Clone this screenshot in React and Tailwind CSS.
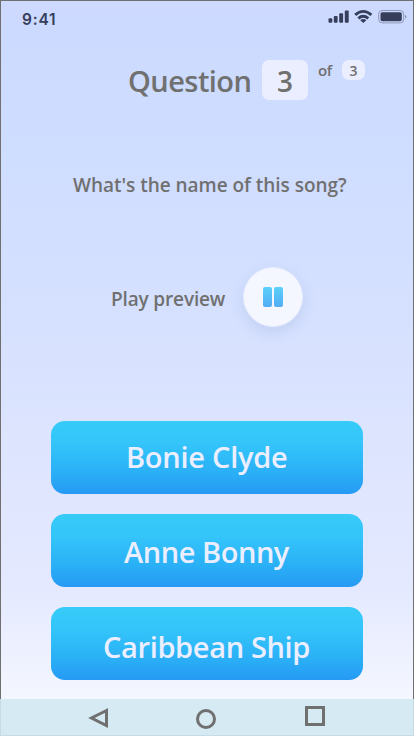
import React from "react";

const answers = [
  { label: "Bonie Clyde", style: "pt-[21px] pl-[75px] tracking-[-0.25px]" },
  { label: "Anne Bonny", style: "pt-[23px] pl-[73px] tracking-[-0.45px]" },
  { label: "Caribbean Ship", style: "pt-[25px] pl-[52px] tracking-[-0.35px]" },
];

function StatusBar() {
  return (
    <header className="flex h-[32px] shrink-0 items-start justify-between pl-[21px] text-[#363e5c]">
      <span className="pt-[10px] font-[Inter,sans-serif] text-[15.5px] leading-[18px] font-semibold tracking-[0.8px]">9:41</span>
      <svg width="80" height="32" viewBox="328 0 80 32" fill="currentColor" className="mt-[-1px] mr-[5px]">
        <rect x="328.5" y="18.3" width="3.8" height="4.5" rx="1" />
        <rect x="333.8" y="16" width="3.8" height="6.8" rx="1" />
        <rect x="339.2" y="13.3" width="3.9" height="9.5" rx="1" />
        <rect x="344.8" y="10.5" width="3.9" height="12.3" rx="1" />
        <g fill="none" stroke="currentColor" strokeWidth="2.8">
          <path d="M355.2 14.9 Q363.2 7.9 371.4 14.9" />
          <path d="M358.3 18.4 Q363.2 14.2 368.3 18.4" />
        </g>
        <path d="M360.2 20.2 Q363.2 17.8 366.4 20.2 L363.3 23Z" />
        <rect x="378.7" y="10.5" width="25" height="12.4" rx="3.5" fill="none" stroke="#8e98b9" />
        <rect x="380.5" y="12.2" width="21.3" height="9" rx="1.8" />
        <path d="M405 14.7 Q408 16.7 405 18.7Z" fill="#8e98b9" />
      </svg>
    </header>
  );
}

export default function App() {
  return (
    <div className="flex h-[736px] w-[414px] flex-col overflow-hidden font-['Open_Sans','Noto_Sans',sans-serif] font-semibold whitespace-nowrap text-[#707070]">
      <main className="flex h-[699px] shrink-0 flex-col border border-b-0 border-[#707070] bg-[linear-gradient(180deg,#cdd9ff_0%,#cddcff_14%,#d6e1ff_46%,#dee5fe_66%,#e4e9ff_84%,#f4f7ff_100%)]">
        <StatusBar />
        <div className="flex h-[69px] items-start pt-[27px] pl-[127px] leading-none">
          <h1 className="w-[134px] pt-[6px] text-[29px] leading-[30px] tracking-[-0.55px]">Question</h1>
          <div className="flex h-[40px] w-[46px] justify-center rounded-[7px] bg-[#ebeeff] pt-[6px] text-[28px] leading-[30px]">3</div>
          <span className="w-[34px] pt-[3px] pl-[10px] text-[15px] font-semibold tracking-[-0.4px]">of</span>
          <div className="flex h-[20px] w-[23px] justify-center rounded-[7px] bg-[#ebeeff] pt-[4px] text-[14px] leading-none font-semibold">3</div>
        </div>
        <h2 className="mt-[73px] h-[28px] pl-[72px] text-[19px] leading-[20px] tracking-[-0.03px]">What's the name of this song?</h2>
        <div className="mt-[64px] flex h-[60px] items-start pl-[110px]">
          <span className="w-[132px] pt-[22px] text-[19px] leading-[20px] tracking-[-0.15px]">Play preview</span>
          <button aria-label="Pause" className="flex size-[60px] items-center justify-center gap-[2px] rounded-full border border-[#e8edfd] bg-[#f4f7ff] shadow-[0_5px_14px_rgba(75,105,170,0.15)]">
            <span className="h-[20px] w-[9px] rounded-[2px] bg-linear-to-b from-[#5bd0f9] to-[#52adf5]" />
            <span className="h-[20px] w-[9px] rounded-[2px] bg-linear-to-b from-[#5bd0f9] to-[#52adf5]" />
          </button>
        </div>
        <div className="mt-[94px] flex flex-col gap-[20px] px-[50px]">
          {answers.map(({ label, style }) => (
            <button
              key={label}
              className={`h-[73px] w-[312px] rounded-[14px] bg-[linear-gradient(180deg,#36cbf8_0%,#34c5fa_30%,#2ab0f6_70%,#269af4_100%)] text-left text-[29px] leading-[30px] text-[#ebeeff] ${style}`}
            >
              <span className="block h-[73px]">{label}</span>
            </button>
          ))}
        </div>
      </main>
      <nav className="flex h-[37px] shrink-0 items-start border border-t-0 border-[#c5dce5] bg-[#d6eaf3] pl-[87px]">
        <svg width="21" height="20" viewBox="0 0 21 20" className="mt-[9px]" fill="none" stroke="#707070" strokeWidth="3">
          <path d="M18.5 2.5 L3.5 10 L18.5 17.5Z" />
        </svg>
        <span className="mt-[10px] ml-[87px] size-[20px] rounded-full border-3 border-[#707070]" />
        <span className="mt-[7px] ml-[89px] size-[20px] border-3 border-[#707070]" />
      </nav>
    </div>
  );
}
